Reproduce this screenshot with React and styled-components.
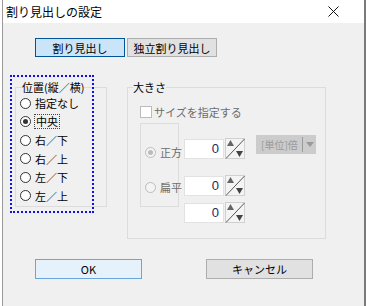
import React from 'react';
import styled, { createGlobalStyle } from 'styled-components';

const GlobalStyle = createGlobalStyle`
  html, body {
    margin: 0;
    padding: 0;
    background: #ffffff;
  }
  body {
    font-family: "Noto Sans CJK JP", "Liberation Sans", sans-serif;
    font-size: 11px;
    color: #000;
    white-space: nowrap;
  }
`;

const FONT = `"Noto Sans CJK JP", "Liberation Sans", sans-serif`;

const Frame = styled.div`
  margin-left: 2px;
  width: 361px;
  height: 306px;
  border-left: 1px solid #9a9a9a;
  border-right: 2px solid #7a7a7a;
  display: flex;
  flex-direction: column;
  background: #f0f0f0;
`;

const TitleBar = styled.div`
  height: 23px;
  background: #ffffff;
  display: flex;
  align-items: center;
  justify-content: space-between;
  padding: 0 25px 0 3px;
  font-family: ${FONT};
  font-size: 12px;
`;

const Content = styled.div`
  flex: 1;
  display: flex;
  flex-direction: column;
  padding-left: 12px;
`;

const TabRow = styled.div`
  display: flex;
  gap: 2px;
  margin-top: 15px;
  padding-left: 20px;
`;

const PushButton = styled.button`
  width: ${p => p.$w}px;
  height: ${p => p.$h}px;
  box-sizing: border-box;
  margin: 0;
  padding: 0;
  font-family: ${FONT};
  font-size: 11px;
  color: #000;
  background: ${p => (p.$active ? '#cce4f7' : p.$def ? '#e5f1fb' : '#e1e1e1')};
  border: 1px solid ${p => (p.$active ? '#005499' : p.$def ? '#6aa6de' : '#adadad')};
  display: flex;
  align-items: center;
  justify-content: center;
`;

const MainRow = styled.div`
  position: relative;
  display: flex;
  gap: 20px;
  margin-top: 24px;
`;

const FocusRect = styled.div`
  position: absolute;
  left: -5px;
  top: -6px;
  width: 80px;
  height: 134px;
  border: 2px dotted #1010ee;
  pointer-events: none;
`;

const Group = styled.fieldset`
  margin: 0;
  padding: 0;
  width: ${p => p.$w}px;
  height: ${p => p.$h}px;
  box-sizing: border-box;
  border: 1px solid #dcdcdc;
  display: flex;
  flex-direction: column;
`;

const Legend = styled.legend`
  padding: 0;
  margin-left: ${p => p.$ml}px;
  font-family: ${FONT};
  font-size: 11px;
  line-height: 12px;
  color: #000;
`;

const RadioList = styled.div`
  display: flex;
  flex-direction: column;
  padding: 1px 0 0 4px;
`;

const RadioRow = styled.div`
  display: flex;
  align-items: center;
  gap: 4px;
  height: ${p => p.$h || 18.5}px;
  font-family: ${FONT};
  font-size: 11px;
  color: ${p => (p.$dim ? '#6d6d6d' : '#000')};
`;

const RadioDot = styled.span`
  width: ${p => p.$size || 11}px;
  height: ${p => p.$size || 11}px;
  box-sizing: border-box;
  border-radius: 50%;
  border: 1px solid ${p => (p.$dim ? '#bcbcbc' : '#333')};
  background: ${p => (p.$dim ? '#f4f4f4' : '#fff')};
  display: flex;
  align-items: center;
  justify-content: center;
  flex: none;
  &::after {
    content: '';
    display: ${p => (p.$checked ? 'block' : 'none')};
    width: 5px;
    height: 5px;
    border-radius: 50%;
    background: ${p => (p.$dim ? '#bcbcbc' : '#333')};
  }
`;

const FocusText = styled.span`
  outline: 1px dotted #444;
  outline-offset: 0;
  line-height: 13px;
  padding: 0 1px;
`;

const SizeBody = styled.div`
  display: flex;
  flex-direction: column;
  padding: 12px 0 0 12px;
`;

const CheckRow = styled.div`
  display: flex;
  align-items: center;
  gap: 2px;
  height: 14px;
  font-family: ${FONT};
  font-size: 11px;
  color: #6d6d6d;
`;

const CheckBox = styled.span`
  width: 12px;
  height: 12px;
  box-sizing: border-box;
  border: 1px solid #bcbcbc;
  background: #fff;
  flex: none;
`;

const SizeRow = styled.div`
  display: flex;
  margin-top: 4px;
`;

const ShapeBox = styled.div`
  width: 39px;
  height: 84px;
  box-sizing: border-box;
  border: 1px solid #dcdcdc;
  display: flex;
  flex-direction: column;
  padding: 21px 0 0 4px;
  gap: 21px;
`;

const FieldColumn = styled.div`
  display: flex;
  flex-direction: column;
  margin: 15px 0 0 5px;
`;

const FieldRow = styled.div`
  display: flex;
  align-items: center;
  gap: 1px;
  margin-top: ${p => p.$mt || 0}px;
`;

const NumBox = styled.div`
  width: 40px;
  height: 20px;
  box-sizing: border-box;
  background: #fff;
  border: 1px solid #e2e2e2;
  display: flex;
  align-items: center;
  justify-content: flex-end;
  padding-right: 4px;
  font-family: "Liberation Sans", sans-serif;
  font-size: 13px;
  color: #1e2a5a;
`;

const UnitSelect = styled.div`
  margin: 12px 0 0 11px;
  width: 60px;
  height: 19px;
  box-sizing: border-box;
  background: #cccccc;
  display: flex;
  align-items: center;
  padding-left: 5px;
  font-family: ${FONT};
  font-size: 10px;
  color: #9a9a9a;
`;

const UnitArrow = styled.div`
  margin-left: auto;
  height: 15px;
  width: 13px;
  border-left: 1px solid #9a9a9a;
  display: flex;
  align-items: center;
  justify-content: center;
`;

const ButtonRow = styled.div`
  display: flex;
  gap: 64px;
  margin-top: 20px;
  padding-left: 20px;
`;

const Spinner = () => (
  <svg width="20" height="21" viewBox="0 0 20 21">
    <rect x="0.5" y="0.5" width="19" height="20" fill="#f4f4f4" stroke="#d0d0d0" />
    <line x1="1" y1="20.5" x2="19.5" y2="1" stroke="#555" strokeWidth="1" />
    <polygon points="2,8 5.5,2 9,8" fill="#666" />
    <polygon points="11,13 18,13 14.5,19" fill="#444" />
  </svg>
);

const CloseIcon = () => (
  <svg width="11" height="11" viewBox="0 0 11 11">
    <path d="M0.5 0.5 L10.5 10.5 M10.5 0.5 L0.5 10.5" stroke="#111" strokeWidth="1" />
  </svg>
);

const positions = ['指定なし', '中央', '右／下', '右／上', '左／下', '左／上'];

const App = () => {
  return (
    <>
      <GlobalStyle />
      <Frame>
        <TitleBar>
          <span>割り見出しの設定</span>
          <CloseIcon />
        </TitleBar>
        <Content>
          <TabRow>
            <PushButton $w={90} $h={19} $active>割り見出し</PushButton>
            <PushButton $w={90} $h={19}>独立割り見出し</PushButton>
          </TabRow>

          <MainRow>
            <Group $w={92} $h={126}>
              <Legend $ml={6}>位置(縦／横)</Legend>
              <RadioList>
                {positions.map((label, i) => (
                  <RadioRow key={label}>
                    <RadioDot $checked={i === 1} />
                    {i === 1 ? <FocusText>{label}</FocusText> : <span>{label}</span>}
                  </RadioRow>
                ))}
              </RadioList>
            </Group>

            <Group $w={199} $h={158}>
              <Legend $ml={5}>大きさ</Legend>
              <SizeBody>
                <CheckRow>
                  <CheckBox />
                  <span>サイズを指定する</span>
                </CheckRow>
                <SizeRow>
                  <ShapeBox>
                    <RadioRow $h={14} $dim>
                      <RadioDot $size={11} $dim $checked />
                      <span>正方</span>
                    </RadioRow>
                    <RadioRow $h={14} $dim>
                      <RadioDot $size={11} $dim />
                      <span>扁平</span>
                    </RadioRow>
                  </ShapeBox>
                  <FieldColumn>
                    <FieldRow>
                      <NumBox>0</NumBox>
                      <Spinner />
                    </FieldRow>
                    <FieldRow $mt={16}>
                      <NumBox>0</NumBox>
                      <Spinner />
                    </FieldRow>
                    <FieldRow $mt={6}>
                      <NumBox>0</NumBox>
                      <Spinner />
                    </FieldRow>
                  </FieldColumn>
                  <UnitSelect>
                    <span>[単位]倍</span>
                    <UnitArrow>
                      <svg width="8" height="5" viewBox="0 0 8 5">
                        <polygon points="0,0 8,0 4,5" fill="#9a9a9a" />
                      </svg>
                    </UnitArrow>
                  </UnitSelect>
                </SizeRow>
              </SizeBody>
            </Group>
            <FocusRect />
          </MainRow>

          <ButtonRow>
            <PushButton $w={107} $h={20} $def>OK</PushButton>
            <PushButton $w={107} $h={20}>キャンセル</PushButton>
          </ButtonRow>
        </Content>
      </Frame>
    </>
  );
};

export default App;
